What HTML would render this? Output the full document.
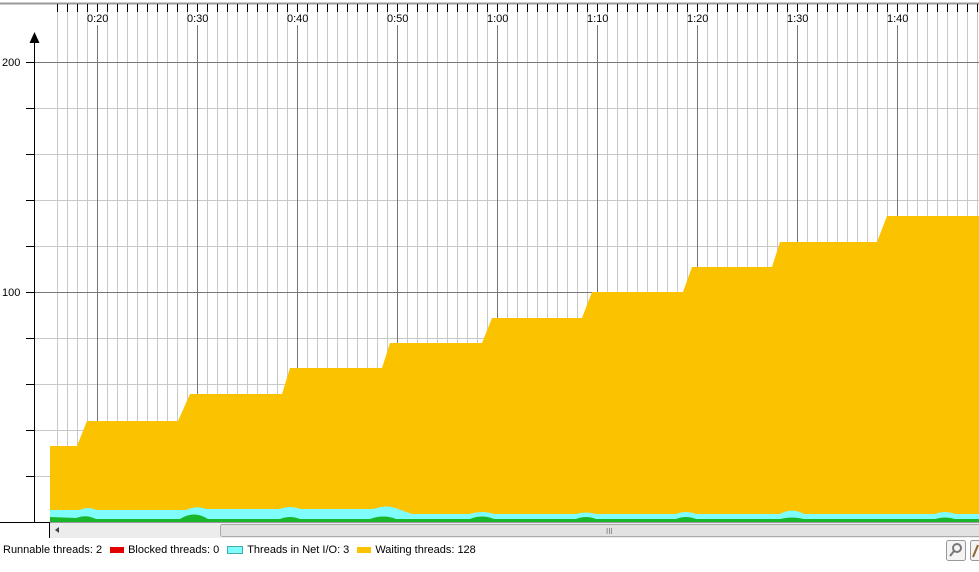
<!DOCTYPE html>
<html><head><style>
body{margin:0;width:979px;height:572px;background:#fff;overflow:hidden;font-family:"Liberation Sans",sans-serif;}
.leg{position:absolute;top:544px;left:3px;font-size:11px;color:#000;white-space:nowrap;}
.sw{display:inline-block;width:14px;height:6px;vertical-align:middle;margin:0 4px 0 8px;}
</style></head><body>
<svg width="979" height="572" style="position:absolute;left:0;top:0" xmlns="http://www.w3.org/2000/svg">
<line x1="0" y1="3.5" x2="979" y2="3.5" stroke="#999" stroke-width="2"/>
<g stroke="#c8c8c8" stroke-width="1">
<path d="M57.5 4V522M67.5 4V522M77.5 4V522M87.5 4V522M107.5 4V522M117.5 4V522M127.5 4V522M137.5 4V522M147.5 4V522M157.5 4V522M167.5 4V522M177.5 4V522M187.5 4V522M207.5 4V522M217.5 4V522M227.5 4V522M237.5 4V522M247.5 4V522M257.5 4V522M267.5 4V522M277.5 4V522M287.5 4V522M307.5 4V522M317.5 4V522M327.5 4V522M337.5 4V522M347.5 4V522M357.5 4V522M367.5 4V522M377.5 4V522M387.5 4V522M407.5 4V522M417.5 4V522M427.5 4V522M437.5 4V522M447.5 4V522M457.5 4V522M467.5 4V522M477.5 4V522M487.5 4V522M507.5 4V522M517.5 4V522M527.5 4V522M537.5 4V522M547.5 4V522M557.5 4V522M567.5 4V522M577.5 4V522M587.5 4V522M607.5 4V522M617.5 4V522M627.5 4V522M637.5 4V522M647.5 4V522M657.5 4V522M667.5 4V522M677.5 4V522M687.5 4V522M707.5 4V522M717.5 4V522M727.5 4V522M737.5 4V522M747.5 4V522M757.5 4V522M767.5 4V522M777.5 4V522M787.5 4V522M807.5 4V522M817.5 4V522M827.5 4V522M837.5 4V522M847.5 4V522M857.5 4V522M867.5 4V522M877.5 4V522M887.5 4V522M907.5 4V522M917.5 4V522M927.5 4V522M937.5 4V522M947.5 4V522M957.5 4V522M967.5 4V522M977.5 4V522"/>
<path d="M34 108.5H979M34 154.5H979M34 200.5H979M34 246.5H979M34 338.5H979M34 384.5H979M34 430.5H979M34 476.5H979"/>
</g>
<g stroke="#777" stroke-width="1">
<path d="M97.5 25V522M197.5 25V522M297.5 25V522M397.5 25V522M497.5 25V522M597.5 25V522M697.5 25V522M797.5 25V522M897.5 25V522"/>
<path d="M34 62.5H979M34 292.5H979"/>
</g>
<g stroke="#000" stroke-width="1">
<path d="M57.5 4V12M67.5 4V12M77.5 4V12M87.5 4V12M97.5 4V12M107.5 4V12M117.5 4V12M127.5 4V12M137.5 4V12M147.5 4V12M157.5 4V12M167.5 4V12M177.5 4V12M187.5 4V12M197.5 4V12M207.5 4V12M217.5 4V12M227.5 4V12M237.5 4V12M247.5 4V12M257.5 4V12M267.5 4V12M277.5 4V12M287.5 4V12M297.5 4V12M307.5 4V12M317.5 4V12M327.5 4V12M337.5 4V12M347.5 4V12M357.5 4V12M367.5 4V12M377.5 4V12M387.5 4V12M397.5 4V12M407.5 4V12M417.5 4V12M427.5 4V12M437.5 4V12M447.5 4V12M457.5 4V12M467.5 4V12M477.5 4V12M487.5 4V12M497.5 4V12M507.5 4V12M517.5 4V12M527.5 4V12M537.5 4V12M547.5 4V12M557.5 4V12M567.5 4V12M577.5 4V12M587.5 4V12M597.5 4V12M607.5 4V12M617.5 4V12M627.5 4V12M637.5 4V12M647.5 4V12M657.5 4V12M667.5 4V12M677.5 4V12M687.5 4V12M697.5 4V12M707.5 4V12M717.5 4V12M727.5 4V12M737.5 4V12M747.5 4V12M757.5 4V12M767.5 4V12M777.5 4V12M787.5 4V12M797.5 4V12M807.5 4V12M817.5 4V12M827.5 4V12M837.5 4V12M847.5 4V12M857.5 4V12M867.5 4V12M877.5 4V12M887.5 4V12M897.5 4V12M907.5 4V12M917.5 4V12M927.5 4V12M937.5 4V12M947.5 4V12M957.5 4V12M967.5 4V12M977.5 4V12"/>
<path d="M34.5 40V522"/>
<path d="M26 62.5H34M26 108.5H34M26 154.5H34M26 200.5H34M26 246.5H34M26 292.5H34M26 338.5H34M26 384.5H34M26 430.5H34M26 476.5H34"/>
<path d="M0 522.5H50M49.5 522V538"/>
</g>
<polygon points="34.5,32 29.5,43 39.5,43" fill="#000"/>
<polygon fill="#fbc200" points="50,446 77,446 87,421 178,421 190,394 282,394 290,368 382,368 390,343 482,343 492,318 582,318 592,292 683,292 692,267 772,267 780,242 877,242 887,216 979,216 979,522 50,522"/>
<path fill="#7ffcfc" d="M50 510 L80 510 Q88 506 96 510 L186 510 Q196 505 206 509 L280 509 Q290 505 300 509 L374 509 Q386 504 398 509 L412 514 L470 514 Q482 510 494 514 L576 514 Q586 511 596 514 L676 514 Q686 510 696 514 L780 514 Q792 507 804 514 L935 514 Q945 510 955 514 L979 514 L979 522 L50 522Z"/>
<path fill="#19b62b" d="M50 517 L76 518 Q86 514 96 519 L180 519 Q194 510 208 519 L280 519 Q290 515 300 519 L370 519 Q384 514 396 519 L470 519 Q482 514 494 519 L576 519 Q586 515 596 519 L676 519 Q686 515 696 519 L780 519 Q792 516 804 519 L935 519 Q945 516 955 519 L979 519 L979 522 L50 522Z"/>
<rect x="50" y="522" width="929" height="16" fill="#ececec"/>
<line x1="50" y1="522.5" x2="979" y2="522.5" stroke="#999"/>
<rect x="220.5" y="524.5" width="760" height="12" rx="2" fill="#e2e2e2" stroke="#aaa"/>
<text x="606" y="534" font-size="8" fill="#777" font-family="Liberation Sans">III</text>
<polygon points="55,530 59,527 59,533" fill="#444"/>
<rect x="946.5" y="540.5" width="19" height="20" rx="2" fill="#f4f4f4" stroke="#999"/>
<circle cx="957" cy="548" r="4" fill="none" stroke="#777" stroke-width="2"/>
<line x1="954" y1="551" x2="950" y2="556" stroke="#777" stroke-width="2"/>
<rect x="970.5" y="540.5" width="12" height="20" rx="2" fill="#f4f4f4" stroke="#999"/>
<line x1="978" y1="545" x2="973" y2="557" stroke="#8a6a30" stroke-width="2"/>
<g font-family="'Liberation Sans',sans-serif" font-size="11" fill="#000">
<text x="87" y="22">0:20</text><text x="187" y="22">0:30</text><text x="287" y="22">0:40</text><text x="387" y="22">0:50</text><text x="487" y="22">1:00</text><text x="587" y="22">1:10</text><text x="687" y="22">1:20</text><text x="787" y="22">1:30</text><text x="887" y="22">1:40</text>
<text x="2" y="66">200</text><text x="2" y="296">100</text>
</g>
</svg>
<div class="leg">Runnable threads: 2<span class="sw" style="background:#e00000"></span>Blocked threads: 0<span class="sw" style="background:#7ffcfc;border:1px solid #4aa"></span>Threads in Net I/O: 3<span class="sw" style="background:#fbc200"></span>Waiting threads: 128</div>
</body></html>
